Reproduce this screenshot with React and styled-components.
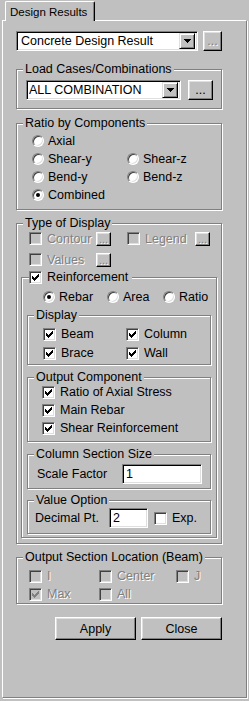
import React from "react";
import styled, { createGlobalStyle } from "styled-components";

const GlobalStyle = createGlobalStyle`
  * { box-sizing: border-box; }
  body { margin: 0; background: #c0c0c0; }
`;

const Window = styled.div`
  width: 249px;
  height: 701px;
  display: flex;
  flex-direction: column;
  background: #c0c0c0;
  color: #000;
  font-family: "Liberation Sans", Arial, sans-serif;
  font-size: 12.5px;
  line-height: 14px;
`;

const TabStrip = styled.div`
  display: flex;
  align-items: flex-end;
  height: 20px;
  padding-left: 5px;
`;

const Tab = styled.div`
  position: relative;
  z-index: 1;
  width: 90px;
  height: 20px;
  margin-bottom: -1px;
  padding: 3px 0 0 4px;
  background: #c0c0c0;
  border: 1px solid #fff;
  border-right-color: #000;
  border-bottom: none;
  border-radius: 2px 2px 0 0;
  box-shadow: inset -1px 0 #808080;
  font-size: 11.5px;
`;

const Panel = styled.div`
  flex: 1;
  margin: 0 2px 3px;
  padding: 10px 0 0 13px;
  border: 1px solid;
  border-color: #fff #808080 #808080 #fff;
  box-shadow: 1px 1px #fff;
`;

const Content = styled.div`
  width: 206px;
  display: flex;
  flex-direction: column;
`;

const Row = styled.div`
  display: flex;
  align-items: center;
  gap: ${(p) => p.$gap ?? 5}px;
  height: ${(p) => p.$h ?? 14}px;
  margin: ${(p) => p.$m || "0"};
`;

const Group = styled.fieldset`
  margin: ${(p) => p.$m || "0"};
  padding: 0;
  min-inline-size: 0;
  border: 1px solid #808080;
  box-shadow: inset 1px 1px #fff, 1px 1px #fff;
`;

const Legend = styled.legend`
  margin-left: ${(p) => p.$x ?? 6}px;
  padding: ${(p) => p.$pad || "0 2px"};
  line-height: 15px;
  background: #c0c0c0;
`;

const LegendInner = styled.span`
  display: inline-flex;
  align-items: center;
  gap: 5px;
  height: 15px;
  vertical-align: top;
`;

const Body = styled.div`
  padding: ${(p) => p.$pad};
`;

const OptionGrid = styled.div`
  display: grid;
  grid-template-columns: ${(p) => p.$cols};
  row-gap: ${(p) => p.$gap ?? 4}px;
  margin: ${(p) => p.$m || "0"};
`;

const Item = styled.div`
  display: flex;
  align-items: center;
  gap: ${(p) => p.$gap ?? 5}px;
  height: ${(p) => p.$h ?? 14}px;
  width: ${(p) => (p.$w ? `${p.$w}px` : "auto")};
  margin-left: ${(p) => p.$ml ?? 0}px;
  grid-column: ${(p) => (p.$span ? "1 / -1" : "auto")};
  flex: none;
`;

const Label = styled.span`
  white-space: nowrap;
  width: ${(p) => (p.$w ? `${p.$w}px` : "auto")};
  flex: none;
  color: ${(p) => (p.$disabled ? "#808080" : "#000")};
  text-shadow: ${(p) => (p.$disabled ? "1px 1px #fff" : "none")};
`;

const CheckBox = styled.span`
  display: inline-flex;
  align-items: center;
  justify-content: center;
  flex: none;
  width: 13px;
  height: 13px;
  border: 1px solid;
  border-color: #808080 #fff #fff #808080;
  box-shadow: inset 1px 1px #404040, inset -1px -1px #dfdfdf;
  background: ${(p) => (p.$disabled ? "#c0c0c0" : "#fff")};
`;

const RadioBox = styled.span`
  display: inline-flex;
  align-items: center;
  justify-content: center;
  flex: none;
  width: 12px;
  height: 12px;
  border-radius: 50%;
  border: 1px solid;
  border-color: #808080 #fff #fff #808080;
  box-shadow: inset 1px 1px #404040, inset -1px -1px #dfdfdf;
  background: #fff;
`;

const Dot = styled.span`
  width: 4px;
  height: 4px;
  border-radius: 50%;
  background: #000;
`;

const Raised = styled.button`
  display: flex;
  align-items: center;
  justify-content: center;
  flex: none;
  width: ${(p) => p.$w}px;
  height: ${(p) => p.$h}px;
  padding: 0;
  margin: 0;
  background: #c0c0c0;
  border: 1px solid;
  border-color: #fff #000 #000 #fff;
  box-shadow: inset -1px -1px #808080, inset 1px 1px #dfdfdf;
  font: inherit;
  font-size: ${(p) => p.$fs ?? 12.5}px;
  color: ${(p) => (p.$disabled ? "#808080" : "#000")};
  text-shadow: ${(p) => (p.$disabled ? "1px 1px #fff" : "none")};
`;

const Combo = styled.div`
  display: flex;
  align-items: center;
  flex: none;
  width: ${(p) => p.$w}px;
  height: 20px;
  padding: 2px 2px 2px ${(p) => p.$pad}px;
  background: #fff;
  border: 1px solid;
  border-color: #808080 #fff #fff #808080;
  box-shadow: inset 1px 1px #000, inset -1px -1px #dfdfdf;
`;

const ComboText = styled.span`
  flex: 1;
  white-space: nowrap;
  overflow: hidden;
  line-height: 16px;
`;

const DropButton = styled.span`
  display: flex;
  align-items: center;
  justify-content: center;
  flex: none;
  width: 16px;
  height: 16px;
  background: #c0c0c0;
  border: 1px solid;
  border-color: #dfdfdf #000 #000 #dfdfdf;
  box-shadow: inset 1px 1px #fff, inset -1px -1px #808080;
`;

const Field = styled.div`
  flex: none;
  width: ${(p) => p.$w}px;
  height: 20px;
  padding: 2px 0 0 3px;
  line-height: 15px;
  background: #fff;
  border: 1px solid;
  border-color: #808080 #fff #fff #808080;
  box-shadow: inset 1px 1px #000, inset -1px -1px #dfdfdf;
`;

const ButtonRow = styled.div`
  display: flex;
  justify-content: flex-end;
  gap: 5px;
  margin-top: 13px;
`;

const Check = ({ checked, disabled }) => (
  <CheckBox $disabled={disabled}>
    {checked && (
      <svg width="7" height="7" viewBox="0 0 7 7" shapeRendering="crispEdges">
        <path
          fill={disabled ? "#808080" : "#000"}
          d="M6 0h1v1h-1z M5 1h2v1h-2z M0 2h1v1h-1z M4 2h3v1h-3z M0 3h2v1h-2z M3 3h3v1h-3z M0 4h5v1h-5z M1 5h3v1h-3z M2 6h1v1h-1z"
        />
      </svg>
    )}
  </CheckBox>
);

const Radio = ({ checked }) => <RadioBox>{checked && <Dot />}</RadioBox>;

const Arrow = () => (
  <svg width="7" height="4" viewBox="0 0 7 4" shapeRendering="crispEdges">
    <path fill="#000" d="M0 0h7v1h-7z M1 1h5v1h-5z M2 2h3v1h-3z M3 3h1v1h-1z" />
  </svg>
);

const Option = ({ label, checked, span }) => (
  <Item $gap={4} $span={span}>
    <Radio checked={checked} />
    <Label>{label}</Label>
  </Item>
);

const Toggle = ({ label, checked, disabled, span, ml }) => (
  <Item $span={span} $ml={ml}>
    <Check checked={checked} disabled={disabled} />
    <Label $disabled={disabled}>{label}</Label>
  </Item>
);

const Dots = ({ disabled }) => (
  <Raised $w={15} $h={14} $fs={11} $disabled={disabled}>
    ...
  </Raised>
);

export default function App() {
  return (
    <Window>
      <GlobalStyle />
      <TabStrip>
        <Tab>Design Results</Tab>
      </TabStrip>
      <Panel>
        <Content>
          <Row $h={20}>
            <Combo $w={182} $pad={4}>
              <ComboText>Concrete Design Result</ComboText>
              <DropButton>
                <Arrow />
              </DropButton>
            </Combo>
            <Raised $w={19} $h={20} $disabled>
              ...
            </Raised>
          </Row>

          <Group $m="11px 0 0">
            <Legend>Load Cases/Combinations</Legend>
            <Body $pad="3px 8px 8px 9px">
              <Row $h={20} $gap={7}>
                <Combo $w={155} $pad={2}>
                  <ComboText>ALL COMBINATION</ComboText>
                  <DropButton>
                    <Arrow />
                  </DropButton>
                </Combo>
                <Raised $w={25} $h={20}>
                  ...
                </Raised>
              </Row>
            </Body>
          </Group>

          <Group $m="7px 0 0">
            <Legend>Ratio by Components</Legend>
            <Body $pad="3px 0 7px 15px">
              <OptionGrid $cols="95px auto">
                <Option label="Axial" span />
                <Option label="Shear-y" />
                <Option label="Shear-z" />
                <Option label="Bend-y" />
                <Option label="Bend-z" />
                <Option label="Combined" checked span />
              </OptionGrid>
            </Body>
          </Group>

          <Group $m="6px 0 0">
            <Legend>Type of Display</Legend>
            <Body $pad="0 4px 5px 4px">
              <Row $h={15} $gap={0} $m="0 0 0 8px">
                <Item $w={98}>
                  <Check disabled />
                  <Label $w={44} $disabled>
                    Contour
                  </Label>
                  <Dots disabled />
                </Item>
                <Item>
                  <Check disabled />
                  <Label $w={45} $disabled>
                    Legend
                  </Label>
                  <Dots disabled />
                </Item>
              </Row>
              <Row $h={15} $gap={0} $m="6px 0 0 8px">
                <Item>
                  <Check disabled />
                  <Label $w={44} $disabled>
                    Values
                  </Label>
                  <Dots disabled />
                </Item>
              </Row>

              <Group $m="3px 0 0">
                <Legend $x={7} $pad="0 4px 0 0">
                  <LegendInner>
                    <Check checked />
                    <span>Reinforcement</span>
                  </LegendInner>
                </Legend>
                <Body $pad="5px 5px 3px 5px">
                  <OptionGrid $cols="64px 56px auto" $m="0 0 0 16px">
                    <Option label="Rebar" checked />
                    <Option label="Area" />
                    <Option label="Ratio" />
                  </OptionGrid>

                  <Group $m="4px 0 0">
                    <Legend>Display</Legend>
                    <Body $pad="4px 0 4px 15px">
                      <OptionGrid $cols="83px auto" $gap={5}>
                        <Toggle label="Beam" checked />
                        <Toggle label="Column" checked />
                        <Toggle label="Brace" checked />
                        <Toggle label="Wall" checked />
                      </OptionGrid>
                    </Body>
                  </Group>

                  <Group $m="5px 0 0">
                    <Legend>Output Component</Legend>
                    <Body $pad="0 0 6px 14px">
                      <OptionGrid $cols="auto">
                        <Toggle label="Ratio of Axial Stress" checked />
                        <Toggle label="Main Rebar" checked />
                        <Toggle label="Shear Reinforcement" checked />
                      </OptionGrid>
                    </Body>
                  </Group>

                  <Group $m="5px 0 0">
                    <Legend>Column Section Size</Legend>
                    <Body $pad="2px 0 4px 9px">
                      <Row $h={20} $gap={0}>
                        <Label $w={85}>Scale Factor</Label>
                        <Field $w={80}>1</Field>
                      </Row>
                    </Body>
                  </Group>

                  <Group $m="4px 0 0">
                    <Legend>Value Option</Legend>
                    <Body $pad="0 0 5px 7px">
                      <Row $h={20} $gap={0}>
                        <Label $w={74}>Decimal Pt.</Label>
                        <Field $w={39}>2</Field>
                        <Toggle label="Exp." ml={6} />
                      </Row>
                    </Body>
                  </Group>
                </Body>
              </Group>
            </Body>
          </Group>

          <Group $m="6px 0 0">
            <Legend>Output Section Location (Beam)</Legend>
            <Body $pad="4px 0 2px 12px">
              <OptionGrid $cols="70px 77px auto">
                <Toggle label="I" disabled />
                <Toggle label="Center" disabled />
                <Toggle label="J" disabled />
                <Toggle label="Max" checked disabled />
                <Toggle label="All" disabled />
              </OptionGrid>
            </Body>
          </Group>

          <ButtonRow>
            <Raised $w={81} $h={23}>
              Apply
            </Raised>
            <Raised $w={81} $h={23}>
              Close
            </Raised>
          </ButtonRow>
        </Content>
      </Panel>
    </Window>
  );
}
